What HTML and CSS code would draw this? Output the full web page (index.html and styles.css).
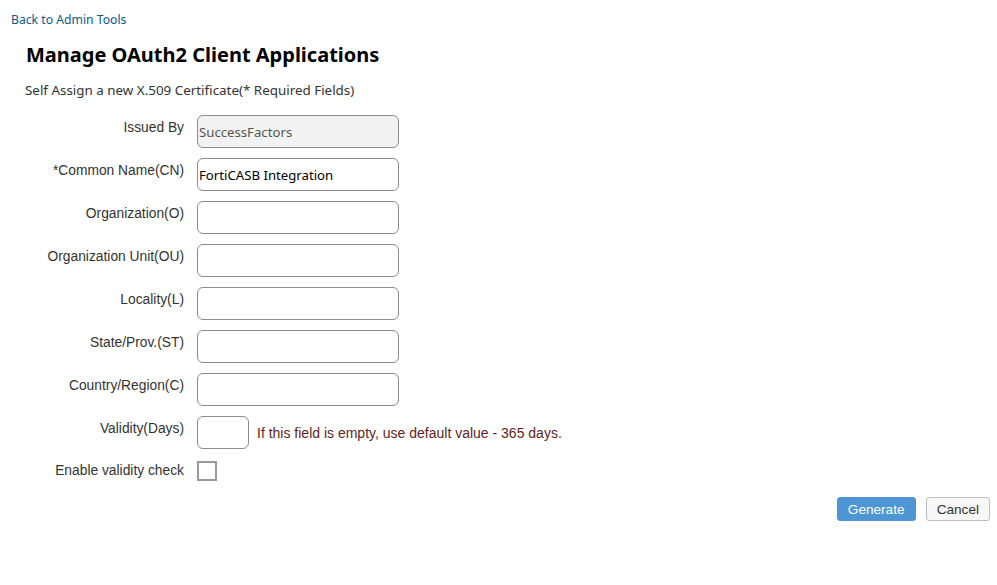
FILE: index.html
```html
<!DOCTYPE html>
<html>
<head>
<meta charset="utf-8">
<link rel="stylesheet" href="styles.css">
</head>
<body>
<div class="page">
  <a class="back" href="#">Back to Admin Tools</a>
  <h1 class="title">Manage OAuth2 Client Applications</h1>
  <p class="subtitle">Self Assign a new X.509 Certificate(* Required Fields)</p>
  <div class="form">
    <label class="lbl">Issued By</label>
    <div class="field"><input class="inp disabled" value="SuccessFactors" disabled></div>
    <label class="lbl">*Common Name(CN)</label>
    <div class="field"><input class="inp" value="FortiCASB Integration"></div>
    <label class="lbl">Organization(O)</label>
    <div class="field"><input class="inp"></div>
    <label class="lbl">Organization Unit(OU)</label>
    <div class="field"><input class="inp"></div>
    <label class="lbl">Locality(L)</label>
    <div class="field"><input class="inp"></div>
    <label class="lbl">State/Prov.(ST)</label>
    <div class="field"><input class="inp"></div>
    <label class="lbl">Country/Region(C)</label>
    <div class="field"><input class="inp"></div>
    <label class="lbl">Validity(Days)</label>
    <div class="field"><input class="inp small"><span class="hint">If this field is empty, use default value - 365 days.</span></div>
    <label class="lbl lbl-check">Enable validity check</label>
    <div class="field"><span class="check"></span></div>
  </div>
  <div class="actions">
    <button class="btn primary">Generate</button>
    <button class="btn">Cancel</button>
  </div>
</div>
</body>
</html>
```
FILE: styles.css
```css
html, body { margin: 0; padding: 0; background: #fff; }
body { font-family: "Liberation Sans", Arial, sans-serif; color: #333; }
.page { padding: 12px 7px 0 11px; }
.back {
  display: block;
  font-family: "Noto Sans", "Open Sans", sans-serif;
  font-size: 12.2px;
  line-height: 16px;
  color: #0b5a8a;
  text-decoration: none;
}
.title {
  margin: 14px 0 0 15px;
  font-family: "Noto Sans", "Open Sans", sans-serif;
  font-size: 20px;
  line-height: 26px;
  font-weight: bold;
  color: #000;
}
.subtitle {
  margin: 13px 0 0 14px;
  font-family: "Noto Sans", "Open Sans", sans-serif;
  font-size: 13.4px;
  line-height: 18px;
  color: #333;
}
.form {
  margin-top: 16px;
  display: grid;
  grid-template-columns: 173px auto;
  column-gap: 13px;
  row-gap: 10px;
}
.lbl {
  text-align: right;
  font-size: 13.8px;
  line-height: 16px;
  padding-top: 5px;
  color: #333;
}
.lbl-check { padding-top: 4px; }
.field { display: flex; align-items: center; }
.inp {
  box-sizing: border-box;
  width: 202px;
  height: 33px;
  border: 1px solid #8c8c8c;
  border-radius: 6px;
  padding: 0 1px;
  margin: 0;
  font-family: "Noto Sans", "Open Sans", sans-serif;
  font-size: 13.2px;
  color: #000;
  background: #fff;
  outline: none;
}
.inp.disabled { background: #f2f2f2; color: #555; }
.inp.small { width: 52px; }
.hint {
  margin-left: 8px;
  font-size: 14px;
  color: #5e1f24;
}
.check {
  display: block;
  box-sizing: border-box;
  width: 20px;
  height: 20px;
  border: 2px solid #999;
  margin-top: 2px;
}
.actions {
  display: flex;
  justify-content: flex-end;
  gap: 10px;
  margin-top: 16px;
}
.btn {
  box-sizing: border-box;
  height: 24px;
  padding: 0 10px;
  font-family: "Liberation Sans", Arial, sans-serif;
  font-size: 13.6px;
  border-radius: 3px;
  border: 1px solid #bfbfbf;
  background: #f7f7f7;
  color: #333;
}
.btn.primary {
  width: 79px;
  background: #4d95d3;
  border-color: #4d95d3;
  color: #fff;
}
```
